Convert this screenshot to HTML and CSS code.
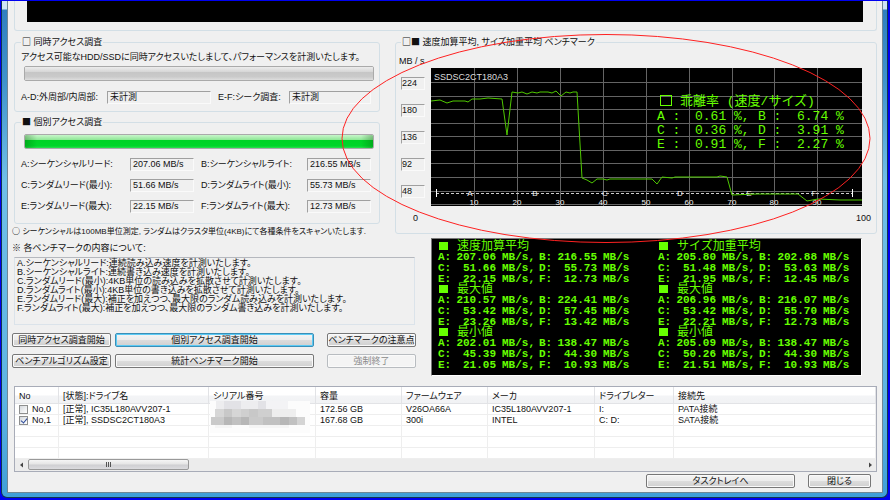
FILE: index.html
```html
<!DOCTYPE html>
<html lang="ja">
<head>
<meta charset="utf-8">
<title>ベンチマーク</title>
<link rel="stylesheet" href="styles.css">
</head>
<body>
<div class="window">
<main class="client">
  <div class="upper-group"><div class="screen"></div></div>

  <div class="measure">
    <div class="left">
      <fieldset class="group">
        <legend><span class="sym">□</span> 同時アクセス調査</legend>
        <p class="intro">アクセス可能なHDD/SSDに同時アクセスいたしまして、パフォーマンスを計測いたします。</p>
        <progress class="bar" value="0" max="100" aria-label="同時アクセス調査"></progress>
        <div class="fields fields-wide">
          <label for="ad">A-D:外周部/内周部:</label><output id="ad">未計測</output>
          <label for="ef">E-F:シーク調査:</label><output id="ef">未計測</output>
        </div>
      </fieldset>
      <fieldset class="group group-single">
        <legend><span class="sym">■</span> 個別アクセス調査</legend>
        <progress class="bar" value="100" max="100" aria-label="個別アクセス調査"></progress>
        <div class="fields">
          <label for="a">A:シーケンシャルリード:</label><output id="a">207.06 MB/s</output>
          <label for="b">B:シーケンシャルライト:</label><output id="b">216.55 MB/s</output>
          <label for="c">C:ランダムリード(最小):</label><output id="c">51.66 MB/s</output>
          <label for="d">D:ランダムライト(最小):</label><output id="d">55.73 MB/s</output>
          <label for="e">E:ランダムリード(最大):</label><output id="e">22.15 MB/s</output>
          <label for="f">F:ランダムライト(最大):</label><output id="f">12.73 MB/s</output>
        </div>
      </fieldset>
      <p class="scan"><span class="sym">○</span> シーケンシャルは100MB単位測定, ランダムはクラスタ単位(4KB)にて各種条件をスキャンいたします.</p>
    </div>

    <fieldset class="group chart-group">
      <legend><span class="sym">□■</span> 速度加算平均, サイズ加重平均 ベンチマーク</legend>
      <div class="chart-area">
        <div class="axis">
          <span class="unit">MB / s</span>
          <output>224</output><output>180</output><output>136</output><output>92</output><output>48</output>
        </div>
        <svg class="chart" viewBox="0 0 431 138" role="img" aria-label="SSDSC2CT180A3">
          <rect width="431" height="138" fill="#000"/>
          <path class="grid" d="M43.5 0V138M86.5 0V138M129.5 0V138M172.5 0V138M215.5 0V138M258.5 0V138M301.5 0V138M343.5 0V138M386.5 0V138M0 14.5H431M0 28.5H431M0 41.5H431M0 55.5H431M0 68.5H431M0 82.5H431M0 95.5H431M0 109.5H431M0 123.5H431M0 136.5H431"/>
          <path class="range" d="M5 125.5H421"/>
          <path class="range-end" d="M5.5 121V129M421.5 121V129"/>
          <g class="mid">
            <text x="39" y="128">A</text><text x="104" y="128">B</text><text x="174" y="128">C</text><text x="249" y="128">D</text><text x="318" y="128">E</text><text x="383" y="128">F</text>
            <text x="43" y="137">10</text><text x="86" y="137">20</text><text x="129" y="137">30</text><text x="172" y="137">40</text><text x="215" y="137">50</text><text x="258" y="137">60</text><text x="301" y="137">70</text><text x="343" y="137">80</text><text x="386" y="137">90</text>
          </g>
          <text class="small" x="3" y="12">SSDSC2CT180A3</text>
          <polyline class="speed" points="0,33 9,32 16,35 22,33 34,33 37,34 41,31 49,31 57,30 71,31 76,67 81,24 87,25 91,24 96,26 101,24 106,25 109,24 117,24 121,25 125,23 130,28 135,24 139,25 142,24 146,24 151,110 156,112 161,115 166,111 172,111 176,112 179,111 221,111 226,116 231,109 241,110 244,109 286,109 289,108 296,109 301,127 326,126 367,126 376,133 387,131 409,132 431,132"/>
          <rect x="229.5" y="27.5" width="11" height="10" fill="none" stroke="#6f0"/>
          <g class="ratio">
            <text x="249" y="37">乖離率 (速度/サイズ)</text>
            <text x="226" y="52">A :</text><text x="264" y="52">0.61 %,</text><text x="327" y="52">B :</text><text x="366" y="52">6.74 %</text>
            <text x="226" y="66">C :</text><text x="264" y="66">0.36 %,</text><text x="327" y="66">D :</text><text x="366" y="66">3.91 %</text>
            <text x="226" y="80">E :</text><text x="264" y="80">0.91 %,</text><text x="327" y="80">F :</text><text x="366" y="80">2.27 %</text>
          </g>
        </svg>
      </div>
      <div class="scale"><span>0</span><span>100</span></div>
    </fieldset>
  </div>

  <div class="details">
    <div class="about">
      <p><span class="sym">※</span> 各ベンチマークの内容について:</p>
      <div class="notes">
        <p>A.シーケンシャルリード:連続読み込み速度を計測いたします。</p>
        <p>B.シーケンシャルライト:連続書き込み速度を計測いたします。</p>
        <p>C.ランダムリード(最小):4KB単位の読み込みを拡散させて計測いたします。</p>
        <p>D.ランダムライト(最小):4KB単位の書き込みを拡散させて計測いたします。</p>
        <p>E.ランダムリード(最大):補正を加えつつ、最大限のランダム読み込みを計測いたします。</p>
        <p>F.ランダムライト(最大):補正を加えつつ、最大限のランダム書き込みを計測いたします。</p>
      </div>
      <div class="actions">
        <button>同時アクセス調査開始</button><button class="default">個別アクセス調査開始</button><button class="side">ベンチマークの注意点</button>
        <button>ベンチアルゴリズム設定</button><button>統計ベンチマーク開始</button><button class="side" disabled>強制終了</button>
      </div>
    </div>
    <div class="stats">
      <table>
        <tbody>
        <tr><th colspan="6"><i class="mark"></i>速度加算平均</th></tr>
        <tr><td>A:</td><td>207.06</td><td>MB/s,</td><td>B:</td><td>216.55</td><td>MB/s</td></tr>
        <tr><td>C:</td><td>51.66</td><td>MB/s,</td><td>D:</td><td>55.73</td><td>MB/s</td></tr>
        <tr><td>E:</td><td>22.15</td><td>MB/s,</td><td>F:</td><td>12.73</td><td>MB/s</td></tr>
        <tr><th colspan="6"><i class="mark"></i>最大値</th></tr>
        <tr><td>A:</td><td>210.57</td><td>MB/s,</td><td>B:</td><td>224.41</td><td>MB/s</td></tr>
        <tr><td>C:</td><td>53.42</td><td>MB/s,</td><td>D:</td><td>57.45</td><td>MB/s</td></tr>
        <tr><td>E:</td><td>23.26</td><td>MB/s,</td><td>F:</td><td>13.42</td><td>MB/s</td></tr>
        <tr><th colspan="6"><i class="mark"></i>最小値</th></tr>
        <tr><td>A:</td><td>202.01</td><td>MB/s,</td><td>B:</td><td>138.47</td><td>MB/s</td></tr>
        <tr><td>C:</td><td>45.39</td><td>MB/s,</td><td>D:</td><td>44.30</td><td>MB/s</td></tr>
        <tr><td>E:</td><td>21.05</td><td>MB/s,</td><td>F:</td><td>10.93</td><td>MB/s</td></tr>
        </tbody>
      </table>
      <table>
        <tbody>
        <tr><th colspan="6"><i class="mark"></i>サイズ加重平均</th></tr>
        <tr><td>A:</td><td>205.80</td><td>MB/s,</td><td>B:</td><td>202.88</td><td>MB/s</td></tr>
        <tr><td>C:</td><td>51.48</td><td>MB/s,</td><td>D:</td><td>53.63</td><td>MB/s</td></tr>
        <tr><td>E:</td><td>21.95</td><td>MB/s,</td><td>F:</td><td>12.45</td><td>MB/s</td></tr>
        <tr><th colspan="6"><i class="mark"></i>最大値</th></tr>
        <tr><td>A:</td><td>206.96</td><td>MB/s,</td><td>B:</td><td>216.07</td><td>MB/s</td></tr>
        <tr><td>C:</td><td>53.42</td><td>MB/s,</td><td>D:</td><td>55.70</td><td>MB/s</td></tr>
        <tr><td>E:</td><td>22.21</td><td>MB/s,</td><td>F:</td><td>12.73</td><td>MB/s</td></tr>
        <tr><th colspan="6"><i class="mark"></i>最小値</th></tr>
        <tr><td>A:</td><td>205.09</td><td>MB/s,</td><td>B:</td><td>138.47</td><td>MB/s</td></tr>
        <tr><td>C:</td><td>50.26</td><td>MB/s,</td><td>D:</td><td>44.30</td><td>MB/s</td></tr>
        <tr><td>E:</td><td>21.51</td><td>MB/s,</td><td>F:</td><td>10.93</td><td>MB/s</td></tr>
        </tbody>
      </table>
    </div>
  </div>

  <div class="list">
    <table class="drives">
      <colgroup><col class="c-no"><col class="c-name"><col class="c-serial"><col class="c-size"><col class="c-size"><col class="c-serial"><col class="c-letter"><col></colgroup>
      <thead>
        <tr><th>No</th><th>[状態]:ドライブ名</th><th>シリアル番号</th><th>容量</th><th>ファームウェア</th><th>メーカ</th><th>ドライブレター</th><th>接続先</th></tr>
      </thead>
      <tbody>
        <tr><td><label><input type="checkbox">No,0</label></td><td>[正常], IC35L180AVV207-1</td>
          <td class="serial"><svg class="mosaic" viewBox="0 0 100 32" aria-hidden="true">
            <rect width="100" height="32" fill="#fcfcfc"/>
            <path fill="#ededef" d="M6 0h8v8H6zM31 0h17v8H31z"/><path fill="#e2e2e6" d="M48 0h8v8h-8zM14 0h17v8H14z"/><path fill="#f3f3f5" d="M56 0h22v8H56z"/>
            <path fill="#d6d6d6" d="M5 8h9v8H5zM22 8h9v8h-9z"/><path fill="#c8c8c8" d="M14 8h8v8h-8zM39 8h9v8h-9z"/><path fill="#cfcfcf" d="M31 8h8v8h-8zM48 8h14v8H48z"/><path fill="#eee" d="M62 8h24v8H62z"/>
            <path fill="#cacaca" d="M1 16h13v8H1zM39 16h14v8H39z"/><path fill="#b7b7b7" d="M14 16h8v8h-8zM31 16h8v8h-8zM70 16h9v8h-9z"/><path fill="#c1c1c1" d="M22 16h9v8h-9zM53 16h17v8H53zM79 16h8v8h-8z"/><path fill="#d4d4d4" d="M87 16h8v8h-8z"/>
            <path fill="#f5f5f5" d="M5 24h17v3H5zM39 24h40v3H39z"/>
          </svg></td>
          <td>172.56 GB</td><td>V26OA66A</td><td>IC35L180AVV207-1</td><td>I:</td><td>PATA接続</td></tr>
        <tr><td><label><input type="checkbox" checked>No,1</label></td><td>[正常], SSDSC2CT180A3</td><td></td><td>167.68 GB</td><td>300i</td><td>INTEL</td><td>C: D:</td><td>SATA接続</td></tr>
        <tr><td></td><td></td><td></td><td></td><td></td><td></td><td></td><td></td></tr>
        <tr><td></td><td></td><td></td><td></td><td></td><td></td><td></td><td></td></tr>
        <tr><td></td><td></td><td></td><td></td><td></td><td></td><td></td><td></td></tr>
      </tbody>
    </table>
    <div class="scrollbar">
      <svg class="arrow" viewBox="0 0 12 12"><path d="M8 3.500V8.500L5 6z" fill="#444"/></svg>
      <div class="thumb"><i></i><i></i><i></i></div>
      <svg class="arrow arrow-end" viewBox="0 0 12 12"><path d="M5 3.500V8.500L8 6z" fill="#444"/></svg>
    </div>
  </div>

  <div class="footer"><button class="tray">タスクトレイへ</button><button class="close">閉じる</button></div>
</main>
</div>
<svg class="highlight" viewBox="0 0 890 500" aria-hidden="true"><ellipse cx="606" cy="138.500" rx="264" ry="104"/></svg>
</body>
</html>
```
FILE: styles.css
```css
* { box-sizing: border-box; }

body {
  margin: 0;
  padding: 1px 2px 2px 1px;
  min-height: 100vh;
  display: flex;
  position: relative;
  background: #0000f0;
  font: 9px/12px "Liberation Sans", "Noto Sans CJK JP", sans-serif;
  font-feature-settings: "palt";
  color: #111;
}

p { margin: 0; white-space: nowrap; }

.sym { font-family: "Noto Sans CJK JP", sans-serif; font-weight: bold; line-height: 9px; }

.window {
  flex: 1;
  display: flex;
  min-width: 0;
  padding: 0 4px 4px 5px;
  border: solid #12354f;
  border-width: 0 1px 1px;
  border-radius: 0 0 6px 6px;
  background: linear-gradient(#cfe4f5 0, #cfe4f5 8px, #2f7fc0 9px, #3f93cc 80px, #6fbfe8 180px, #5db4e2 400px, #3f9fd8);
}

.client {
  flex: 1;
  min-width: 0;
  border: solid #6e8796;
  border-width: 0 1px 1px;
  padding: 0 5px 0 6px;
  background: #f0f0f0;
}

/* Group boxes */
.upper-group {
  height: 30px;
  padding: 0 13px 0 12px;
  border: 1px solid #d3dfe6;
  border-top: 0;
  border-radius: 0 0 3px 3px;
}
.screen { height: 21px; background: #000; }

.measure {
  display: grid;
  grid-template-columns: minmax(0, 366fr) minmax(0, 482fr);
  gap: 15px;
  align-items: start;
  margin-top: 5px;
}

.group {
  min-width: 0;
  margin: 0;
  padding: 3px 4px 7px 6px;
  border: 1px solid #d3dfe6;
  border-radius: 3px;
}
.group legend { height: 12px; padding: 0 1px; line-height: 12px; white-space: nowrap; }
.group-single { margin-top: 4px; padding: 6px 4px 10px 6px; }
.scan { margin: 2px 0 0 -2px; font-size: 8px; }

.bar {
  display: block;
  appearance: none;
  width: calc(100% - 4px);
  height: 15px;
  margin: 0 1px 0 3px;
  border: 1px solid #aaa;
  border-radius: 2px;
  overflow: hidden;
}
.intro + .bar { margin-top: 3px; }
.bar::-webkit-progress-bar { background: linear-gradient(#ececec, #d8d8d8 35%, #c6c6c6 40%, #cacaca 75%, #dedede); }
.bar::-webkit-progress-value {
  background:
    linear-gradient(90deg, rgba(0, 80, 0, .3), transparent 12px, transparent calc(100% - 12px), rgba(0, 80, 0, .3)),
    linear-gradient(#c8f5cb, #8de894 38%, #00d326 42%, #00d62a 85%, #2de050);
}

.fields {
  display: grid;
  grid-template-columns: 109px 64px 1fr 64px;
  row-gap: 8px;
  margin: 9px 4px 0 0;
}
.fields-wide { grid-template-columns: 86px 104px 1fr 82px; margin-top: 10px; }
.fields label { line-height: 13px; white-space: nowrap; }
.fields label:nth-child(4n + 3) { padding-left: 7px; }

output {
  display: block;
  height: 13px;
  padding-left: 2px;
  border: 1px solid #fafafa;
  border-top-color: #a0a0a0;
  border-left-color: #a0a0a0;
  line-height: 10px;
}

/* Chart */
.chart-group { padding: 8px 14px 9px 3px; }
.chart-group legend { margin-left: 2px; }
.chart-area { display: flex; align-items: flex-start; margin-top: 12px; }
.axis { width: 32px; flex: none; display: grid; row-gap: 14px; margin-top: -13px; padding-right: 8px; }
.axis output { margin-left: 2px; padding-left: 0; }
.unit { margin-bottom: -4px; white-space: nowrap; }
.chart { flex: 1; min-width: 0; display: block; }
.scale { display: flex; justify-content: space-between; margin: 6px -9px 0 14px; }

.grid { stroke: #646464; fill: none; }
.range { stroke: #ccc; stroke-dasharray: 3 2; }
.range-end { stroke: #fff; }
.small { font-size: 9px; fill: #ddd; }
.mid { font-size: 8px; fill: #eee; text-anchor: middle; }
.speed { fill: none; stroke: #4fc800; }
.ratio { font: 13px "Liberation Mono", "Noto Sans CJK JP", monospace; fill: #6f0; font-feature-settings: normal; }

/* Descriptions and results */
.details {
  display: grid;
  grid-template-columns: minmax(0, 404fr) minmax(0, 431fr);
  gap: 15px;
  align-items: start;
  margin: 0 15px 0 -2px;
}
.about { padding-top: 4px; }
.notes {
  height: 68px;
  margin: 3px 1px 0 2px;
  padding: 1px 2px;
  border: 1px solid #dbe3ea;
  border-top-color: #b5b8be;
  line-height: 9px;
}
.actions {
  display: grid;
  grid-template-columns: 99fr 199fr 98fr;
  gap: 7px 4px;
  margin-top: 8px;
}
.side { margin-left: 9px; }

button {
  height: 14px;
  min-width: 0;
  padding: 0;
  border: 1px solid #777;
  border-radius: 2px;
  background: linear-gradient(#f4f4f4, #ececec 48%, #dcdcdc 52%, #d0d0d0);
  box-shadow: inset 0 0 0 1px #fafafa;
  font: inherit;
  font-feature-settings: inherit;
  line-height: 12px;
  color: #111;
  white-space: nowrap;
}
.default { border-color: #3a8fb7; box-shadow: inset 0 0 0 1px #5ccbf5; }
button:disabled { border-color: #b8bcc0; background: #f4f4f4; color: #8a8a8a; }

.stats {
  display: grid;
  grid-template-columns: 220fr 203fr;
  padding: 3px 0 4px 6px;
  background: #000;
  border: 1px solid #888;
  border-color: #777 #fff #fff #777;
  color: #6f0;
  font-family: "Liberation Mono", "Noto Sans CJK JP", monospace;
  font-size: 11px;
  font-weight: bold;
  font-feature-settings: normal;
}
.stats table { border-collapse: collapse; justify-self: start; }
.stats td, .stats th { height: 11px; padding: 0; line-height: 11px; text-align: left; white-space: nowrap; }
.stats th { height: 10px; line-height: 10px; font-size: 12px; font-weight: normal; }
.stats td:nth-child(3n + 2) { width: 43px; text-align: right; }
.stats td:nth-child(3n + 3) { padding-left: 6px; }
.stats td:nth-child(3) { width: 43px; }
.stats td:nth-child(3n + 1) { width: 15px; }
.mark { display: inline-block; width: 9px; height: 8px; margin: 0 9px 0 1px; background: #6f0; }

/* Drive list */
.list { margin-top: 10px; border: 1px solid #a8acb8; background: #fff; }
.drives { width: 100%; table-layout: fixed; border-collapse: collapse; }
.drives th, .drives td { padding: 0 0 0 4px; text-align: left; white-space: nowrap; font-weight: normal; }
.drives th {
  height: 17px;
  background: linear-gradient(#fff, #fff 45%, #f3f4f6 55%, #f1f2f4);
  box-shadow: inset -1px -1px #e2e3e6;
}
.drives td { height: 11px; line-height: 11px; box-shadow: inset -1px -1px #eee; }
.drives label { display: flex; align-items: center; gap: 4px; line-height: 11px; }
.c-no { width: 44px; }
.c-name { width: 150px; }
.c-serial { width: 107px; }
.c-size { width: 86px; }
.c-letter { width: 79px; }
.drives input {
  appearance: none;
  width: 9px;
  height: 9px;
  margin: 0;
  border: 1px solid #8e8f8f;
  background: linear-gradient(135deg, #d5d9de, #fff);
}
.drives input:checked::before {
  content: "";
  display: block;
  width: 3px;
  height: 5px;
  margin: 0 auto;
  border: solid #2c4a9a;
  border-width: 0 1px 1px 0;
  transform: rotate(40deg);
}
.serial { position: relative; }
.mosaic { position: absolute; left: 1px; top: -3px; width: 100px; height: 32px; }

.scrollbar { display: flex; height: 12px; background: #ececec; }
.arrow { width: 12px; height: 12px; }
.arrow-end { margin-left: auto; }
.thumb {
  display: flex;
  align-items: center;
  justify-content: center;
  gap: 1px;
  width: 161px;
  margin: 0 0 1px 1px;
  border: 1px solid #999;
  border-radius: 2px;
  background: linear-gradient(#f5f5f5, #e6e6e6 45%, #cfcfd2 55%, #dcdcdf);
}
.thumb i { width: 1px; height: 5px; background: #555; }

.footer { display: flex; gap: 13px; justify-content: flex-end; padding: 2px 6px 4px 0; }
.tray { width: 149px; }
.close { width: 63px; }

/* Attention ring drawn over the chart */
.highlight { position: absolute; left: 0; top: 0; width: 100%; pointer-events: none; }
.highlight ellipse { fill: none; stroke: #f22; }
```
